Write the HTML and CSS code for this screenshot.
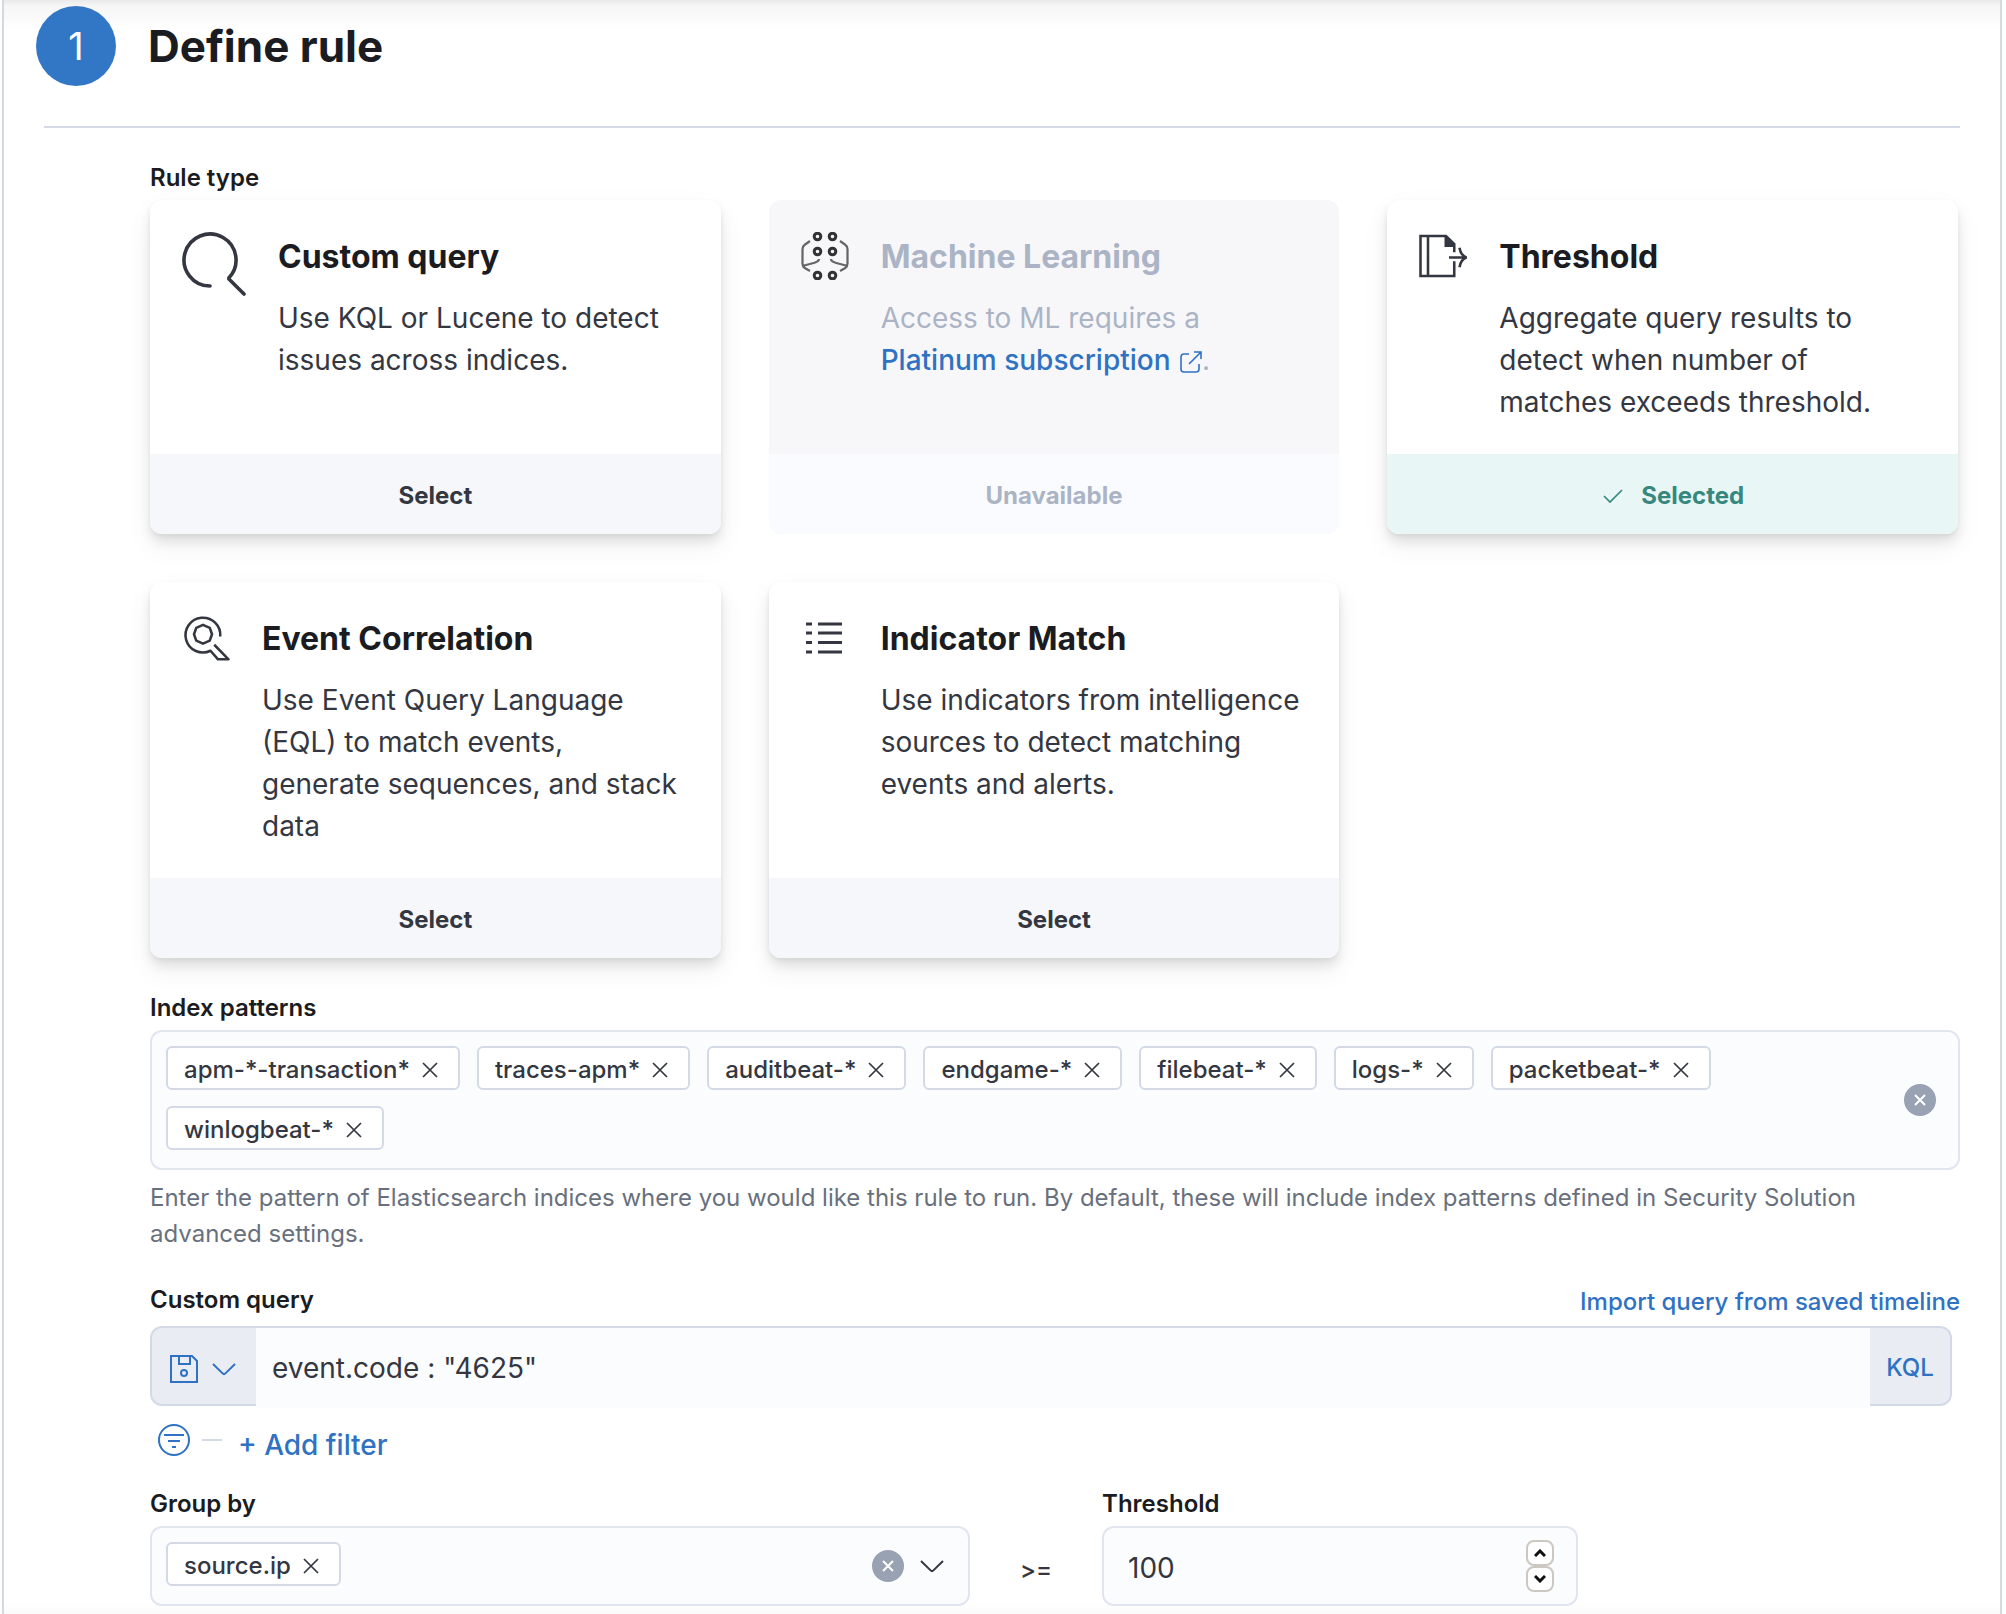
FILE: index.html
```html
<!DOCTYPE html>
<html lang="en">
<head>
<meta charset="utf-8">
<meta name="viewport" content="width=device-width, initial-scale=1">
<title>Define rule</title>
<link rel="stylesheet" href="styles.css">
</head>
<body>
<svg class="sprite" aria-hidden="true">
  <symbol id="cross" viewBox="0 0 16 16"><path d="M1 1l14 14M15 1L1 15"/></symbol>
  <symbol id="clear" viewBox="0 0 32 32"><circle cx="16" cy="16" r="16" fill="#98a2b3" stroke="none"/><path d="M11 11l10 10M21 11L11 21" stroke="#fff"/></symbol>
  <symbol id="chevron" viewBox="0 0 24 14"><path d="M1 2l9.600 9.400a2 2 0 0 0 2.800 0L23 2"/></symbol>
</svg>
<main class="panel">
  <header class="step-header">
    <span class="step-number">1</span>
    <h1 class="step-title">Define rule</h1>
  </header>
  <hr class="divider">
  <form class="step-content">
    <h2 class="label">Rule type</h2>
    <div class="cards">
      <section class="card">
        <div class="card-body">
          <svg class="card-icon card-icon-large" viewBox="0 0 16 16" aria-hidden="true"><path d="M7 13.500A6.500 6.500 0 1 1 11.600 11.600L15.500 15.500" stroke-width=".9" stroke-linecap="round" stroke-linejoin="bevel"/></svg>
          <div class="card-copy">
            <h3 class="card-title">Custom query</h3>
            <p class="card-text">Use KQL or Lucene to detect issues across indices.</p>
          </div>
        </div>
        <button type="button" class="card-button">Select</button>
      </section>

      <section class="card card-disabled">
        <div class="card-body">
          <svg class="card-icon" viewBox="0 0 32 32" aria-hidden="true">
            <g stroke="#333" stroke-width="2"><circle cx="11" cy="3" r="2.200"/><circle cx="21" cy="3" r="2.200"/><circle cx="11" cy="13" r="2.200"/><circle cx="21" cy="13" r="2.200"/><circle cx="11" cy="29" r="2.200"/><circle cx="21" cy="29" r="2.200"/></g>
            <g stroke="#666" stroke-width="1.500"><path d="M6 6L2.500 8.500Q1 9.500 1 11.500V21q0 2 1.500 3L6 26M1.500 22.500L9 20.500q3-1 3-2.500"/><path d="M26 6l3.500 2.500q1.500 1 1.500 3V21q0 2-1.500 3L26 26M30.500 22.500L23 20.500q-3-1-3-2.500"/></g>
          </svg>
          <div class="card-copy">
            <h3 class="card-title">Machine Learning</h3>
            <p class="card-text">Access to ML requires a <a class="link" href="#">Platinum subscription <svg class="popout" viewBox="0 0 22 22" aria-hidden="true"><path d="M9 3H4a3 3 0 0 0-3 3v12a3 3 0 0 0 3 3h12a3 3 0 0 0 3-3v-5M14 1h7v7M21 1L9 13"/></svg></a>.</p>
          </div>
        </div>
        <button type="button" class="card-button" disabled>Unavailable</button>
      </section>

      <section class="card card-selected">
        <div class="card-body">
          <svg class="card-icon" viewBox="0 0 32 32" aria-hidden="true"><path d="M23.500 13.500V8L18 2.700H1V29.300H23.500V19.500M6 2.700V29.300M20 17H31M27 10.500c.5 3.500 2 5.500 4.500 6.500c-2.500 1-4 3-4.500 6.500" stroke-width="1.700"/><path d="M17 3v7h7V8l-5-5z" fill="currentColor" stroke="none"/></svg>
          <div class="card-copy">
            <h3 class="card-title">Threshold</h3>
            <p class="card-text">Aggregate query results to detect when number of matches exceeds threshold.</p>
          </div>
        </div>
        <button type="button" class="card-button"><svg class="check" viewBox="0 0 24 24" aria-hidden="true"><path d="M3 12l6 6L21 6"/></svg>Selected</button>
      </section>

      <section class="card">
        <div class="card-body">
          <svg class="card-icon" viewBox="0 0 32 32" aria-hidden="true"><path d="M25.500 15A11.600 11.600 0 1 0 19 24.500l5 5.700h7L21.500 20.500M14 7.200l4.500 2 1.500 4.300-1.500 4.300-4.500 2-4.500-2L8 13.500l1.500-4.300z" stroke-width="1.700" stroke-linejoin="round"/></svg>
          <div class="card-copy">
            <h3 class="card-title">Event Correlation</h3>
            <p class="card-text">Use Event Query Language (EQL) to match events, generate sequences, and stack data</p>
          </div>
        </div>
        <button type="button" class="card-button">Select</button>
      </section>

      <section class="card">
        <div class="card-body">
          <svg class="card-icon" viewBox="0 0 48 48" aria-hidden="true"><path d="M5 10h6M17 10h24M5 19h6M17 19h24M5 28.500h6M17 28.500h24M5 38h6M17 38h24" stroke-width="3"/></svg>
          <div class="card-copy">
            <h3 class="card-title">Indicator Match</h3>
            <p class="card-text">Use indicators from intelligence sources to detect matching events and alerts.</p>
          </div>
        </div>
        <button type="button" class="card-button">Select</button>
      </section>
    </div>

    <h2 class="label">Index patterns</h2>
    <div class="combo combo-wide">
      <div class="pills">
        <span class="pill">apm-*-transaction*<button type="button" class="icon-button" aria-label="Remove apm-*-transaction*"><svg class="cross"><use href="#cross"/></svg></button></span>
        <span class="pill">traces-apm*<button type="button" class="icon-button" aria-label="Remove traces-apm*"><svg class="cross"><use href="#cross"/></svg></button></span>
        <span class="pill">auditbeat-*<button type="button" class="icon-button" aria-label="Remove auditbeat-*"><svg class="cross"><use href="#cross"/></svg></button></span>
        <span class="pill">endgame-*<button type="button" class="icon-button" aria-label="Remove endgame-*"><svg class="cross"><use href="#cross"/></svg></button></span>
        <span class="pill">filebeat-*<button type="button" class="icon-button" aria-label="Remove filebeat-*"><svg class="cross"><use href="#cross"/></svg></button></span>
        <span class="pill">logs-*<button type="button" class="icon-button" aria-label="Remove logs-*"><svg class="cross"><use href="#cross"/></svg></button></span>
        <span class="pill">packetbeat-*<button type="button" class="icon-button" aria-label="Remove packetbeat-*"><svg class="cross"><use href="#cross"/></svg></button></span>
        <span class="pill">winlogbeat-*<button type="button" class="icon-button" aria-label="Remove winlogbeat-*"><svg class="cross"><use href="#cross"/></svg></button></span>
      </div>
      <button type="button" class="icon-button" aria-label="Clear input"><svg class="clear"><use href="#clear"/></svg></button>
    </div>
    <p class="help">Enter the pattern of Elasticsearch indices where you would like this rule to run. By default, these will include index patterns defined in Security Solution advanced settings.</p>

    <div class="label-row">
      <label class="label" for="query">Custom query</label>
      <a class="link link-small" href="#">Import query from saved timeline</a>
    </div>
    <div class="query-bar">
      <button type="button" class="query-addon query-saved" aria-label="Saved queries">
        <svg class="save" viewBox="0 0 28 28" aria-hidden="true"><path d="M1 1h21l5 5v21H1zM9 1v8h11V1"/><circle cx="14" cy="18" r="3"/></svg>
        <svg class="chevron"><use href="#chevron"/></svg>
      </button>
      <input class="query-input" id="query" type="text" value='event.code : "4625"'>
      <button type="button" class="query-addon query-language">KQL</button>
    </div>
    <div class="filters">
      <button type="button" class="icon-button" aria-label="Filter options"><svg class="filter" viewBox="0 0 32 32" aria-hidden="true"><circle cx="16" cy="16" r="15"/><path d="M6 11h20M10 17h12M14 23h4"/></svg></button>
      <span class="dash"></span>
      <button type="button" class="add-filter">+ Add filter</button>
    </div>

    <div class="threshold-row">
      <div class="group-field">
        <h2 class="label">Group by</h2>
        <div class="combo">
          <div class="pills"><span class="pill">source.ip<button type="button" class="icon-button" aria-label="Remove source.ip"><svg class="cross"><use href="#cross"/></svg></button></span></div>
          <button type="button" class="icon-button" aria-label="Clear input"><svg class="clear"><use href="#clear"/></svg></button>
          <button type="button" class="icon-button" aria-label="Open list"><svg class="chevron"><use href="#chevron"/></svg></button>
        </div>
      </div>
      <span class="operator">&gt;=</span>
      <div class="value-field">
        <label class="label" for="threshold">Threshold</label>
        <div class="number-box">
          <input class="number-input" id="threshold" type="number" value="100">
          <div class="spinner">
            <button type="button" class="spin" aria-label="Increase"><svg viewBox="0 0 12 8" aria-hidden="true"><path d="M1 7l5-5 5 5"/></svg></button>
            <button type="button" class="spin" aria-label="Decrease"><svg viewBox="0 0 12 8" aria-hidden="true"><path d="M1 1l5 5 5-5"/></svg></button>
          </div>
        </div>
      </div>
    </div>
  </form>
</main>
</body>
</html>
```

FILE: styles.css
```css
:root {
  --text: #343741;
  --title: #1a1c21;
  --blue: #2f72c3;
  --border: #d3dae6;
  --field: #fbfcfe;
  --field-border: #e1e5f0;
}

* { box-sizing: border-box; }

body {
  margin: 0;
  color: var(--text);
  background: #fff;
  font: 400 28px/42px Inter, "Liberation Sans", sans-serif;
}

h1, h2, h3, p { margin: 0; }

button, input { font: inherit; color: inherit; margin: 0; }
button { border: 0; padding: 0; background: none; cursor: pointer; }

svg { display: block; fill: none; stroke: currentColor; stroke-width: 2; }
.sprite { display: none; }

.panel {
  min-height: 100vh;
  margin: 0 4px 0 2px;
  padding: 6px 40px 8px;
  border: solid var(--border);
  border-width: 0 2px;
  background:
    linear-gradient(#e9e9e9, #f6f6f6 6px, #fff 30px) top / 100% 30px no-repeat,
    linear-gradient(#fff, #fafafa) bottom / 100% 12px no-repeat,
    #fff;
}

.step-header { display: flex; align-items: center; gap: 32px; margin-left: -8px; }
.step-number {
  width: 80px;
  border-radius: 50%;
  background: #3277c6;
  color: #fff;
  font-size: 38px;
  line-height: 80px;
  text-align: center;
}
.step-title { color: var(--title); font-size: 44px; line-height: 56px; font-weight: 700; }

.divider { height: 2px; margin: 40px 0 32px; border: 0; background: var(--border); }

.step-content { padding-left: 106px; }

.label {
  display: block;
  color: var(--title);
  font-size: 24px;
  line-height: 36px;
  font-weight: 600;
}

.cards {
  display: grid;
  grid-template-columns: repeat(3, 1fr);
  gap: 48px;
  margin: 4px 2px 32px 0;
}
.card {
  display: flex;
  flex-direction: column;
  overflow: hidden;
  border-radius: 12px;
  background: #fff;
  box-shadow: 0 2px 4px rgba(0, 0, 0, .05), 0 8px 12px rgba(0, 0, 0, .09), 0 12px 30px rgba(0, 0, 0, .06);
}
.card-body { display: flex; flex: 1; gap: 32px; padding: 32px 32px 31px; }
.card-copy { padding-top: 1px; }
.card-icon { flex: none; width: 48px; height: 48px; }
.card-icon-large { width: 64px; height: 64px; }
.card-title { margin-bottom: 16px; color: var(--title); font-size: 32px; line-height: 48px; font-weight: 700; }
.card-button {
  display: flex;
  align-items: center;
  justify-content: center;
  gap: 16px;
  height: 80px;
  padding-top: 3px;
  background: #f5f7fb;
  font-size: 24px;
  font-weight: 700;
}
.check { width: 24px; height: 24px; stroke-width: 1.7; }

.card-selected .card-button { background: #e8f7f6; color: #37877e; }
.card-disabled { background: #f7f7fa; box-shadow: none; color: #abb4c4; }
.card-disabled .card-title { color: inherit; }
.card-disabled .card-button { background: #fafbfe; cursor: default; }

.link { color: var(--blue); font-weight: 500; text-decoration: none; }
.link-small { margin-top: 2px; font-size: 24px; line-height: 36px; }
.popout { display: inline-block; width: 22px; height: 22px; margin-left: 2px; vertical-align: -3px; stroke-width: 1.600; }

.combo {
  display: flex;
  align-items: center;
  gap: 16px;
  margin-top: 4px;
  padding: 0 24px 0 14px;
  border: 2px solid var(--field-border);
  border-radius: 12px;
  background: var(--field);
}
.combo-wide { gap: 100px; padding-right: 22px; }
.pills { display: flex; flex: 1; flex-wrap: wrap; gap: 16px 17px; padding: 14px 0 18px; }
.pill {
  display: flex;
  align-items: center;
  gap: 12px;
  height: 44px;
  padding: 6px 20px 2px 16px;
  border: 2px solid var(--border);
  border-radius: 6px;
  background: #fff;
  font-size: 24px;
  line-height: 36px;
  font-weight: 500;
}
.cross { width: 16px; height: 16px; stroke-width: 1.7; }
.clear { width: 32px; height: 32px; }
.chevron { width: 24px; height: 14px; }

.help { margin: 10px 0 30px; color: #69707d; font-size: 24px; line-height: 36px; }

.label-row { display: flex; align-items: flex-start; justify-content: space-between; height: 44px; }

.query-bar { display: flex; height: 80px; margin-right: 8px; }
.query-addon {
  border: 2px solid var(--border);
  background: #e9edf3;
  color: var(--blue);
}
.query-saved {
  display: flex;
  align-items: center;
  gap: 14px;
  padding: 6px 18px 0;
  width: 106px;
  border-right: 0;
  border-radius: 12px 0 0 12px;
}
.save { width: 28px; height: 28px; }
.query-language {
  width: 82px;
  padding-top: 3px;
  border-left: 0;
  border-radius: 0 12px 12px 0;
  font-size: 24px;
  font-weight: 500;
}
.query-input {
  flex: 1;
  min-width: 0;
  height: 82px;
  padding: 0 16px;
  border: 0;
  border-top: 2px solid var(--border);
  background: var(--field);
}

.filters { display: flex; align-items: center; gap: 12px; margin-top: 12px; padding: 0 8px; color: var(--blue); }
.filter { width: 32px; height: 32px; margin-bottom: 4px; }
.dash { width: 20px; height: 2px; margin-bottom: 4px; background: var(--border); }
.add-filter { margin: 6px 4px 0; font-weight: 500; }

.threshold-row { display: flex; align-items: flex-end; gap: 50px; margin-top: 20px; }
.group-field { flex: 0 1 820px; }
.value-field { flex: 0 1 476px; min-width: 0; }
.operator { font-size: 24px; line-height: 72px; font-weight: 500; }
.number-box {
  display: flex;
  align-items: center;
  height: 80px;
  margin-top: 4px;
  padding: 0 22px 0 24px;
  border: 2px solid var(--field-border);
  border-radius: 12px;
  background: var(--field);
}
.number-input {
  flex: 1;
  min-width: 0;
  border: 0;
  padding: 4px 0 0;
  background: none;
  appearance: textfield;
}
.number-input::-webkit-inner-spin-button { appearance: none; }
.spinner { display: flex; flex-direction: column; }
.spin {
  display: flex;
  align-items: center;
  justify-content: center;
  width: 28px;
  height: 26px;
  border: 2px solid #cdc7c2;
  border-radius: 8px;
  background: #fff;
  color: #111;
}
.spin svg { width: 12px; height: 8px; stroke-width: 3; }
```
